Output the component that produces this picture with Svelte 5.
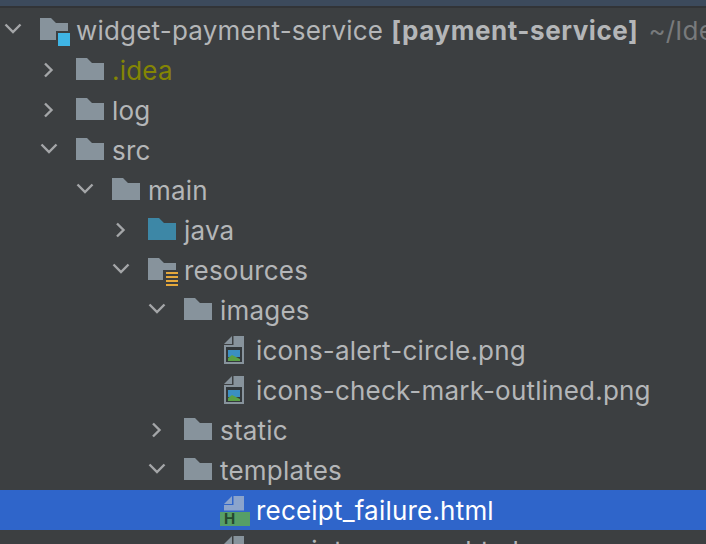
<script>
	// project tree rows, depth drives the indent
	const rows = [
		{ depth: 0, open: true, icon: 'module', name: 'widget-payment-service', bold: '[payment-service]', path: '~/IdeaProjects/widget' },
		{ depth: 1, open: false, icon: 'folder', name: '.idea', tone: 'ignored' },
		{ depth: 1, open: false, icon: 'folder', name: 'log' },
		{ depth: 1, open: true, icon: 'folder', name: 'src' },
		{ depth: 2, open: true, icon: 'folder', name: 'main' },
		{ depth: 3, open: false, icon: 'source', name: 'java' },
		{ depth: 3, open: true, icon: 'resources', name: 'resources' },
		{ depth: 4, open: true, icon: 'folder', name: 'images' },
		{ depth: 5, icon: 'image', name: 'icons-alert-circle.png' },
		{ depth: 5, icon: 'image', name: 'icons-check-mark-outlined.png' },
		{ depth: 4, open: false, icon: 'folder', name: 'static' },
		{ depth: 4, open: true, icon: 'folder', name: 'templates' },
		{ depth: 5, icon: 'html', name: 'receipt_failure.html', selected: true },
		{ depth: 5, icon: 'html', name: 'receipt_success.html' }
	];
</script>

<div class="panel">
	<div class="titlebar"></div>
	<ul class="tree">
		{#each rows as row}
			<li class="row" class:selected={row.selected} style="padding-left: {row.depth * 36 + 4}px">
				<span class="arrow">
					{#if row.open === true}
						<svg width="18" height="18" viewBox="0 0 18 18"><path d="M1.5 3.5L9 11l7.5-7.5" /></svg>
					{:else if row.open === false}
						<svg width="18" height="18" viewBox="0 0 18 18"><path d="M5 2.5L11.5 9 5 15.5" /></svg>
					{/if}
				</span>
				<span class="icon">
					{#if row.icon === 'image'}
						<svg class="page" width="20" height="28" viewBox="0 0 20 28">
							<path class="file" d="M9.5 0H20v28H0V9h9.5z" />
							<path class="file" d="M8 0v8H0z" />
							<rect x="2" y="11" width="16" height="15" fill="#33383b" />
							<rect x="4" y="14" width="12" height="7" fill="#3b8fc2" />
							<path d="M4 25v-3l4-3 8 4v2z" fill="#5aa045" />
						</svg>
					{:else if row.icon === 'html'}
						<svg class="page" width="20" height="28" viewBox="0 0 20 28">
							<path class="file" d="M9.5 0H20v14.5H0V9h9.5z" />
							<path class="file" d="M8 0v8H0z" />
						</svg>
						<span class="badge">H</span>
					{:else}
						<svg class="dir" width="28" height="22" viewBox="0 0 28 22">
							<path class={row.icon === 'source' ? 'source' : 'folder'} d="M0 0h11l5 5h12v17H0z" />
						</svg>
						{#if row.icon === 'module'}
							<span class="square"></span>
						{:else if row.icon === 'resources'}
							<span class="bars"></span>
						{/if}
					{/if}
				</span>
				<span class="name {row.tone ?? ''}">{row.name}</span>
				{#if row.bold}
					<b>{row.bold}</b>
					<span class="path">{row.path}</span>
				{/if}
			</li>
		{/each}
	</ul>
</div>

<style>
	:global(body) {
		margin: 0;
		background: #3c3f41;
	}
	.panel {
		width: 706px;
		height: 544px;
		overflow: hidden;
		background: #3c3f41;
		font-family: Inter, "Noto Sans", sans-serif;
		font-size: 26px;
		letter-spacing: 0.2px;
		color: #b4b6b8;
	}
	.titlebar {
		height: 6px;
		background: #3c4a5c;
		border-bottom: 2px solid #323437;
		margin-bottom: 2px;
	}
	.tree {
		list-style: none;
		margin: 0;
		padding: 0;
	}
	.row {
		display: flex;
		align-items: center;
		height: 40px;
		white-space: nowrap;
	}
	.row.selected {
		background: #2f65ca;
		color: #fff;
	}
	.arrow {
		width: 36px;
		flex: none;
		display: flex;
	}
	.arrow path {
		fill: none;
		stroke: #a4a6a8;
		stroke-width: 2.4;
	}
	.icon {
		position: relative;
		width: 36px;
		height: 30px;
		flex: none;
		display: flex;
		align-items: center;
	}
	.dir {
		margin-bottom: 2px;
	}
	.page {
		margin-left: 4px;
		align-self: flex-start;
		margin-top: 1px;
	}
	.folder,
	.file {
		fill: #87939c;
	}
	.selected .file {
		fill: #8ba4cc;
	}
	.source {
		fill: #3d87a6;
	}
	.square {
		position: absolute;
		left: 16px;
		top: 16px;
		width: 12px;
		height: 13px;
		background: #3fb5e5;
		border: 2px solid #3c3f41;
	}
	.bars {
		position: absolute;
		left: 15px;
		top: 15px;
		width: 12px;
		height: 14px;
		border: solid #3c3f41;
		border-width: 2px 0 0 3px;
		background: repeating-linear-gradient(#e5a83b 0 2px, #3c3f41 2px 4px);
	}
	.badge {
		position: absolute;
		left: 0;
		top: 17px;
		width: 30px;
		height: 14px;
		padding-left: 4px;
		box-sizing: border-box;
		background: #569e67;
		color: #25482f;
		font-size: 15px;
		font-weight: 700;
		line-height: 14px;
	}
	.ignored {
		color: #848504;
	}
	b {
		margin-left: 8px;
		font-weight: 700;
		letter-spacing: 0.55px;
	}
	.path {
		margin-left: 10px;
		color: #787a7c;
	}
</style>
